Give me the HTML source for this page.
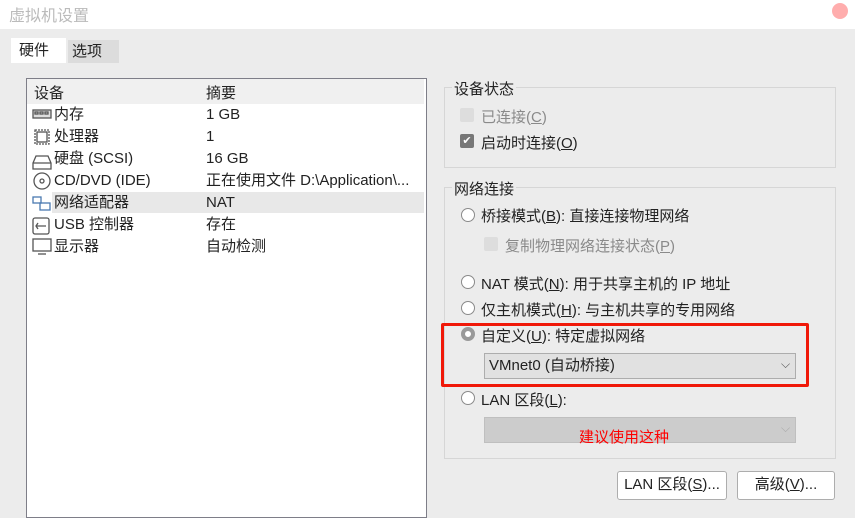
<!DOCTYPE html>
<html><head><meta charset="utf-8"><style>
*{margin:0;padding:0;box-sizing:border-box}
body{width:855px;height:507px;background:#ececec;position:relative;overflow:hidden;font-family:"Liberation Sans","Noto Sans CJK SC",sans-serif;font-size:15px;color:#222}
.a{position:absolute;white-space:nowrap}
.title{left:0;top:0;width:855px;height:29px;background:#fff}
.grp{position:absolute;border:1px solid #d6d6d6}
.lbl{position:absolute;background:#ececec;padding:0 2px}
.radio{position:absolute;width:14px;height:14px;border:1px solid #8a8a8a;border-radius:50%;background:#fff}
.cb{position:absolute;width:14px;height:14px;border-radius:2px;background:#ddd}
.u{text-decoration:underline}
.btn{position:absolute;background:#fff;border:1px solid #adadad;border-radius:3px;text-align:center;line-height:26px}
.row{position:absolute;left:54px;height:22px;line-height:22px}
</style></head><body>
<div class="a title"></div>
<div class="a" style="left:9px;top:2px;font-size:16px;color:#bbb">虚拟机设置</div>
<div class="a" style="left:832px;top:3px;width:16px;height:16px;border-radius:50%;background:#ffadad"></div>
<div class="a" style="left:11px;top:38px;width:55px;height:25px;background:#fff;line-height:25px;padding-left:8px">硬件</div>
<div class="a" style="left:68px;top:40px;width:51px;height:23px;background:#dcdcdc;line-height:23px;padding-left:4px">选项</div>
<div class="a" style="left:26px;top:78px;width:401px;height:440px;background:#fff;border:1px solid #7e7e88"></div>
<div class="a" style="left:27px;top:79px;width:397px;height:25px;background:#f0f0f0"></div>
<div class="a" style="left:34px;top:82px">设备</div>
<div class="a" style="left:206px;top:82px">摘要</div>
<div class="a" style="left:52px;top:192px;width:372px;height:21px;background:#e8e8e8"></div>
<svg class="a" style="left:32px;top:105px" width="22" height="154" viewBox="0 0 22 154" fill="none" stroke="#555" stroke-width="1.3">
<rect x="1" y="5" width="18" height="8" fill="#ddd"/><rect x="3" y="7" width="3" height="2"/><rect x="8" y="7" width="3" height="2"/><rect x="13" y="7" width="3" height="2"/>
<rect x="3" y="25" width="14" height="14" stroke-dasharray="2 1"/><rect x="5" y="27" width="10" height="10"/>
<path d="M1 58l3-7h12l3 7v6H1z M1 58h18"/>
<circle cx="10" cy="76" r="8"/><circle cx="10" cy="76" r="2"/>
<rect x="1" y="92" width="8" height="6" stroke="#4a7ab0"/><rect x="8" y="98" width="10" height="7" stroke="#4a7ab0"/>
<rect x="1" y="113" width="16" height="16" rx="2"/><path d="M4 121h10M6 118l-2 3 2 3"/>
<rect x="1" y="134" width="18" height="12"/><path d="M6 149h8"/>
</svg>
<div class="row" style="top:104px">内存</div><div class="a" style="left:206px;top:104px;line-height:22px">1 GB</div>
<div class="row" style="top:126px">处理器</div><div class="a" style="left:206px;top:126px;line-height:22px">1</div>
<div class="row" style="top:148px">硬盘 (SCSI)</div><div class="a" style="left:206px;top:148px;line-height:22px">16 GB</div>
<div class="row" style="top:170px">CD/DVD (IDE)</div><div class="a" style="left:206px;top:170px;line-height:22px">正在使用文件 D:\Application\...</div>
<div class="row" style="top:192px">网络适配器</div><div class="a" style="left:206px;top:192px;line-height:22px">NAT</div>
<div class="row" style="top:214px">USB 控制器</div><div class="a" style="left:206px;top:214px;line-height:22px">存在</div>
<div class="row" style="top:236px">显示器</div><div class="a" style="left:206px;top:236px;line-height:22px">自动检测</div>

<div class="grp" style="left:444px;top:87px;width:392px;height:81px"></div>
<div class="lbl" style="left:452px;top:78px">设备状态</div>
<div class="cb" style="left:460px;top:108px"></div><div class="a" style="left:481px;top:106px;color:#8a8a8a">已连接(<span class="u">C</span>)</div>
<div class="cb" style="left:460px;top:134px;background:#777;color:#fff;font-size:11px;line-height:14px;text-align:center">✔</div><div class="a" style="left:481px;top:132px">启动时连接(<span class="u">O</span>)</div>

<div class="grp" style="left:444px;top:187px;width:392px;height:272px"></div>
<div class="lbl" style="left:452px;top:178px">网络连接</div>
<div class="radio" style="left:461px;top:208px"></div><div class="a" style="left:481px;top:205px">桥接模式(<span class="u">B</span>): 直接连接物理网络</div>
<div class="cb" style="left:484px;top:237px"></div><div class="a" style="left:505px;top:235px;color:#8a8a8a">复制物理网络连接状态(<span class="u">P</span>)</div>
<div class="radio" style="left:461px;top:275px"></div><div class="a" style="left:481px;top:273px">NAT 模式(<span class="u">N</span>): 用于共享主机的 IP 地址</div>
<div class="radio" style="left:461px;top:301px"></div><div class="a" style="left:481px;top:299px">仅主机模式(<span class="u">H</span>): 与主机共享的专用网络</div>
<div class="radio" style="left:461px;top:327px;border:4px solid #999"></div><div class="a" style="left:481px;top:325px">自定义(<span class="u">U</span>): 特定虚拟网络</div>
<div class="a" style="left:484px;top:353px;width:312px;height:26px;background:#e1e1e1;border:1px solid #adadad;line-height:24px;padding-left:4px">VMnet0 (自动桥接)</div>
<div class="a" style="left:781px;top:357px;color:#555;font-size:12px">⌵</div>
<div class="a" style="left:441px;top:323px;width:368px;height:64px;border:3px solid #f01808;border-radius:2px"></div>
<div class="radio" style="left:461px;top:391px"></div><div class="a" style="left:481px;top:389px">LAN 区段(<span class="u">L</span>):</div>
<div class="a" style="left:484px;top:417px;width:312px;height:26px;background:#cccccc;border:1px solid #bfbfbf"></div>
<div class="a" style="left:579px;top:426px;color:#f00">建议使用这种</div>
<div class="a" style="left:781px;top:421px;color:#aaa;font-size:12px">⌵</div>
<div class="btn" style="left:617px;top:471px;width:110px;height:29px">LAN 区段(<span class="u">S</span>)...</div>
<div class="btn" style="left:737px;top:471px;width:98px;height:29px">高级(<span class="u">V</span>)...</div>
</body></html>
